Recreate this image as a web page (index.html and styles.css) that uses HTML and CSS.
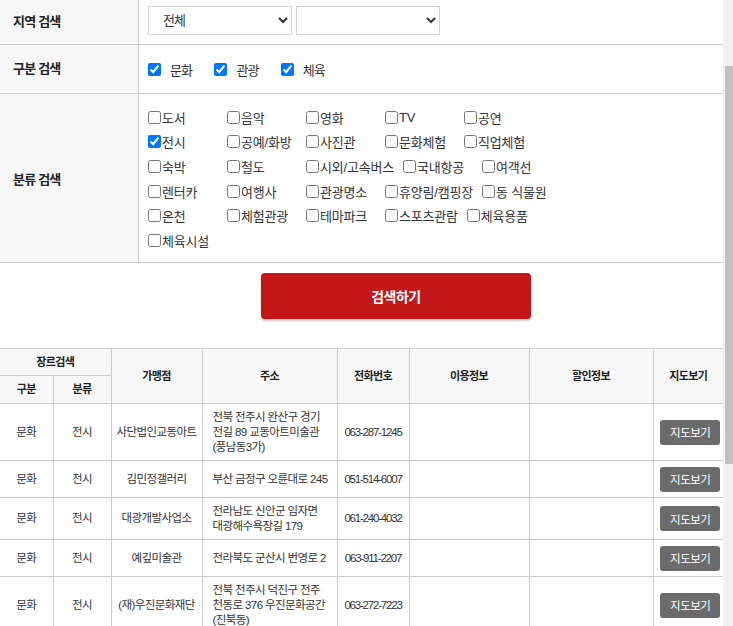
FILE: index.html
```html
<!DOCTYPE html>
<html lang="ko">
<head>
<meta charset="utf-8">
<title>검색</title>
<link rel="stylesheet" href="styles.css">
</head>
<body>
<div class="page">
  <div class="content">
    <div class="search-form">
      <div class="form-row row-region">
        <div class="form-label">지역 검색</div>
        <div class="form-field">
          <select class="sel"><option>전체</option></select>
          <select class="sel"><option></option></select>
        </div>
      </div>
      <div class="form-row row-type">
        <div class="form-label">구분 검색</div>
        <div class="form-field">
          <label class="type-item"><input type="checkbox" checked><span>문화</span></label>
          <label class="type-item"><input type="checkbox" checked><span>관광</span></label>
          <label class="type-item"><input type="checkbox" checked><span>체육</span></label>
        </div>
      </div>
      <div class="form-row row-cat">
        <div class="form-label">분류 검색</div>
        <div class="form-field cat-list">
          <label class="cat-item"><input type="checkbox"><span>도서</span></label>
          <label class="cat-item"><input type="checkbox"><span>음악</span></label>
          <label class="cat-item"><input type="checkbox"><span>영화</span></label>
          <label class="cat-item"><input type="checkbox"><span>TV</span></label>
          <label class="cat-item"><input type="checkbox"><span>공연</span></label>
          <label class="cat-item"><input type="checkbox" checked><span>전시</span></label>
          <label class="cat-item"><input type="checkbox"><span>공예/화방</span></label>
          <label class="cat-item"><input type="checkbox"><span>사진관</span></label>
          <label class="cat-item"><input type="checkbox"><span>문화체험</span></label>
          <label class="cat-item"><input type="checkbox"><span>직업체험</span></label>
          <label class="cat-item"><input type="checkbox"><span>숙박</span></label>
          <label class="cat-item"><input type="checkbox"><span>철도</span></label>
          <label class="cat-item"><input type="checkbox"><span>시외/고속버스</span></label>
          <label class="cat-item"><input type="checkbox"><span>국내항공</span></label>
          <label class="cat-item"><input type="checkbox"><span>여객선</span></label>
          <label class="cat-item"><input type="checkbox"><span>렌터카</span></label>
          <label class="cat-item"><input type="checkbox"><span>여행사</span></label>
          <label class="cat-item"><input type="checkbox"><span>관광명소</span></label>
          <label class="cat-item"><input type="checkbox"><span>휴양림/캠핑장</span></label>
          <label class="cat-item"><input type="checkbox"><span>동 식물원</span></label>
          <label class="cat-item"><input type="checkbox"><span>온천</span></label>
          <label class="cat-item"><input type="checkbox"><span>체험관광</span></label>
          <label class="cat-item"><input type="checkbox"><span>테마파크</span></label>
          <label class="cat-item"><input type="checkbox"><span>스포츠관람</span></label>
          <label class="cat-item"><input type="checkbox"><span>체육용품</span></label>
          <label class="cat-item"><input type="checkbox"><span>체육시설</span></label>
        </div>
      </div>
    </div>

    <div class="btn-wrap">
      <button class="search-btn" type="button">검색하기</button>
    </div>

    <table class="result">
      <colgroup>
        <col class="c-type"><col class="c-cat"><col class="c-name"><col class="c-addr">
        <col class="c-tel"><col class="c-use"><col class="c-dc"><col class="c-map">
      </colgroup>
      <thead>
        <tr class="head-a">
          <th colspan="2">장르검색</th>
          <th rowspan="2">가맹점</th>
          <th rowspan="2">주소</th>
          <th rowspan="2">전화번호</th>
          <th rowspan="2">이용정보</th>
          <th rowspan="2">할인정보</th>
          <th rowspan="2">지도보기</th>
        </tr>
        <tr class="head-b">
          <th>구분</th>
          <th>분류</th>
        </tr>
      </thead>
      <tbody>
        <tr>
          <td>문화</td><td>전시</td><td>사단법인교동아트</td>
          <td class="addr">전북 전주시 완산구 경기<br>전길 89 교동아트미술관<br>(풍남동3가)</td>
          <td class="tel">063-287-1245</td><td></td><td></td>
          <td><button class="map-btn" type="button">지도보기</button></td>
        </tr>
        <tr>
          <td>문화</td><td>전시</td><td>김민정갤러리</td>
          <td class="addr">부산 금정구 오륜대로 245</td>
          <td class="tel">051-514-6007</td><td></td><td></td>
          <td><button class="map-btn" type="button">지도보기</button></td>
        </tr>
        <tr>
          <td>문화</td><td>전시</td><td>대광개발사업소</td>
          <td class="addr">전라남도 신안군 임자면<br>대광해수욕장길 179</td>
          <td class="tel">061-240-4032</td><td></td><td></td>
          <td><button class="map-btn" type="button">지도보기</button></td>
        </tr>
        <tr>
          <td>문화</td><td>전시</td><td>예깊미술관</td>
          <td class="addr">전라북도 군산시 번영로 2</td>
          <td class="tel">063-911-2207</td><td></td><td></td>
          <td><button class="map-btn" type="button">지도보기</button></td>
        </tr>
        <tr>
          <td>문화</td><td>전시</td><td>(재)우진문화재단</td>
          <td class="addr">전북 전주시 덕진구 전주<br>천동로 376 우진문화공간<br>(진북동)</td>
          <td class="tel">063-272-7223</td><td></td><td></td>
          <td><button class="map-btn" type="button">지도보기</button></td>
        </tr>
      </tbody>
    </table>
  </div>
  <div class="scrollbar"><div class="thumb"></div></div>
</div>
</body>
</html>
```

FILE: styles.css
```css
* { box-sizing: border-box; }
html, body { margin: 0; padding: 0; background: #fff; }
body {
  font-family: "Liberation Sans", "Noto Sans CJK KR", sans-serif;
  color: #333;
}
.page {
  display: flex;
  height: 626px;
  overflow: hidden;
}
.content {
  width: 723px;
  flex: none;
}
.scrollbar {
  width: 10px;
  flex: none;
  background: #f1f1f1;
  padding-left: 2px;
}
.thumb {
  margin-top: 66px;
  height: 398px;
  background: #c1c1c1;
}

/* search form */
.form-row {
  display: flex;
  border-bottom: 1px solid #ccc;
}
.form-label {
  width: 139px;
  flex: none;
  background: #f7f7f7;
  border-right: 1px solid #ccc;
  display: flex;
  align-items: center;
  padding-left: 13px;
  font-size: 13px;
  font-weight: 700;
  letter-spacing: -0.8px;
  color: #222;
}
.row-region .form-label { padding-bottom: 3px; }
.row-type .form-label { padding-bottom: 3px; }
.form-field {
  flex: 1;
  display: flex;
  align-items: center;
  padding-left: 9px;
}
.row-region { height: 45px; }
.row-region .form-field { padding-top: 6px; padding-bottom: 9px; gap: 4px; }
.sel {
  width: 144px;
  height: 29px;
  border: 1px solid #d5d5d5;
  border-radius: 0;
  background: #fff;
  font-family: "Liberation Sans", "Noto Sans CJK KR", sans-serif;
  font-size: 13px;
  letter-spacing: -1px;
  color: #333;
  padding: 0 8px 0 10px;
  margin: 0;
}
.row-type { height: 49px; }
.type-item {
  display: inline-flex;
  align-items: center;
  margin-right: 22.5px;
  font-size: 13px;
  letter-spacing: -1px;
  color: #333;
}
.type-item input {
  width: 13px;
  height: 13px;
  margin: 0 9px 0 0;
}
.row-cat { height: 169px; }
.cat-list {
  flex-wrap: wrap;
  align-content: flex-start;
  align-items: flex-start;
  padding-top: 11px;
  padding-right: 140px;
}
.cat-item {
  display: inline-flex;
  align-items: center;
  height: 24.6px;
  min-width: 79px;
  padding-right: 9px;
  font-size: 13px;
  letter-spacing: -0.2px;
  color: #333;
}
.cat-item input {
  width: 13px;
  height: 13px;
  margin: 0 1px 0 0;
}

/* search button */
.btn-wrap {
  display: flex;
  justify-content: center;
  padding: 10px 0 29px;
}
.search-btn {
  width: 270px;
  height: 46px;
  margin-left: 69px;
  background: #c3181a;
  color: #fff;
  border: 0;
  border-radius: 4px;
  box-shadow: 0 2px 2px rgba(0, 0, 0, 0.22);
  font-family: "Liberation Sans", "Noto Sans CJK KR", sans-serif;
  font-size: 14px;
  font-weight: 700;
  letter-spacing: -0.5px;
}

/* result table */
.result {
  width: 723px;
  table-layout: fixed;
  border-collapse: collapse;
  border-top: 1px solid #999;
  font-size: 11.5px;
  letter-spacing: -0.6px;
  line-height: 15px;
  color: #333;
}
.c-type { width: 53px; }
.c-cat { width: 58px; }
.c-name { width: 91px; }
.c-addr { width: 135px; }
.c-tel { width: 72px; }
.c-use { width: 120px; }
.c-dc { width: 124px; }
.c-map { width: 70px; }
.result th,
.result td {
  border: 1px solid #ccc;
  text-align: center;
  vertical-align: middle;
  padding: 5.5px 2px;
}
.result tr > :first-child { border-left: 0; }
.result tr > :last-child { border-right: 0; }
.result .head-b > :first-child { border-left: 0; }
.result .head-b > :last-child { border-right: 1px solid #ccc; }
.result th {
  background: #f7f7f7;
  font-size: 11px;
  font-weight: 700;
  color: #222;
}
.head-a th { height: 26px; }
.head-b th { height: 28px; }
.result td.addr {
  text-align: left;
  padding-left: 10px;
  padding-right: 2px;
}
.result td.tel { letter-spacing: -1.2px; }
.map-btn {
  width: 60px;
  height: 25px;
  margin-left: 4px;
  border: 0;
  border-radius: 3px;
  background: #6b6b6b;
  color: #fff;
  font-family: "Liberation Sans", "Noto Sans CJK KR", sans-serif;
  font-size: 11.5px;
  letter-spacing: -0.5px;
  padding: 0;
}
```
